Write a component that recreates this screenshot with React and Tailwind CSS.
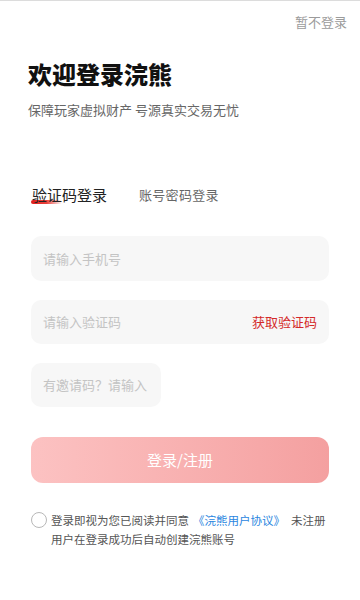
export default function App() {
  return (
    <div className="w-[360px] h-[600px] bg-white border-t border-[#dcdcdc] font-['Noto_Sans_CJK_SC','Noto_Sans',sans-serif] overflow-hidden">
      <div className="flex justify-end pr-[13px] pt-[12px] text-[13px] leading-[18px] text-[#9b9b9b]">暂不登录</div>
      <div className="px-[31px]">
        <div className="-ml-[3px] mt-[27px] text-[24px] leading-[32px] font-black text-[#111]">欢迎登录浣熊</div>
        <div className="-ml-[3px] mt-[11px] text-[13px] leading-[18px] text-[#666]">保障玩家虚拟财产 号源真实交易无忧</div>
        <div className="mt-[66px] flex items-end gap-[32px] pl-[1px]">
          <div className="relative text-[15px] leading-[20px] text-[#222]">
            <span className="absolute left-[-1px] top-[15px] w-[31px] h-[4px] rounded-full bg-gradient-to-r from-[#e01a1a] via-[#e8403a] to-[#f6c0c0]/0"></span>
            <span className="relative">验证码登录</span>
          </div>
          <div className="text-[13px] leading-[20px] text-[#666] tracking-[0.3px]">账号密码登录</div>
        </div>
        <div className="mt-[31px] h-[45px] rounded-[10px] bg-[#f7f7f7] flex items-center px-[12px] text-[13px] text-[#c4c4c4]">请输入手机号</div>
        <div className="mt-[19px] h-[44px] rounded-[10px] bg-[#f7f7f7] flex items-center justify-between px-[12px] text-[13px]">
          <span className="text-[#c4c4c4]">请输入验证码</span>
          <span className="text-[#d42a2a]">获取验证码</span>
        </div>
        <div className="mt-[19px] h-[44px] w-[130px] rounded-[10px] bg-[#f7f7f7] flex items-center px-[12px] text-[13px] text-[#c4c4c4]">有邀请码？请输入</div>
        <div className="mt-[30px] h-[46px] rounded-[12px] bg-gradient-to-r from-[#fcc2c2] to-[#f4a0a0] flex items-center justify-center text-[15px] text-white">登录/注册</div>
        <div className="mt-[29px] flex items-start gap-[4px]">
          <span className="w-[16px] h-[16px] shrink-0 rounded-full border border-[#b8b8b8] bg-white"></span>
          <p className="text-[11.5px] leading-[19px] text-[#555] -mt-[1px] whitespace-nowrap">
            登录即视为您已阅读并同意<span className="ml-[4px] text-[#2a86e0]">《浣熊用户协议》</span><span className="ml-[6px]">未注册</span>
            <br />
            用户在登录成功后自动创建浣熊账号
          </p>
        </div>
      </div>
    </div>
  );
}
